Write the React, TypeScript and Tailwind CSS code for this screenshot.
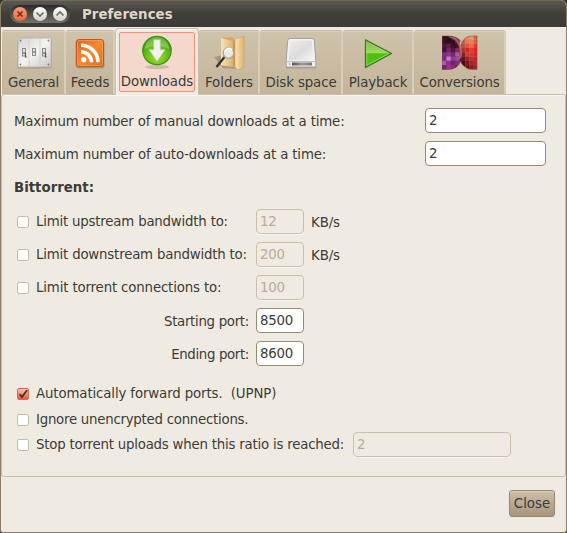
import React from "react";

function SwitchesIcon() {
  return (
    <svg width="36" height="36" viewBox="0 0 36 36">
      <defs>
        <linearGradient id="sw" x1="0" y1="0" x2="1" y2="1">
          <stop offset="0" stopColor="#d4d4d2" />
          <stop offset=".5" stopColor="#f3f3f1" />
          <stop offset="1" stopColor="#c9c9c6" />
        </linearGradient>
      </defs>
      <rect x="1.500" y="4" width="34" height="29.500" rx="2" fill="#887d69" opacity=".45" />
      <rect x="2" y="3" width="33" height="29" rx="1.500" fill="url(#sw)" stroke="#b0aea8" strokeWidth=".8" />
      <path d="M13 3.500v28M24 3.500v28" stroke="#cbcac6" strokeWidth=".8" />
      <g fill="#777"><circle cx="4.500" cy="5.500" r=".9" /><circle cx="32.500" cy="5.500" r=".9" /><circle cx="4.500" cy="29.500" r=".9" /><circle cx="32.500" cy="29.500" r=".9" /></g>
      <g fill="#e4e4e2" stroke="#85827d" strokeWidth=".9">
        <rect x="6.500" y="13.500" width="3" height="7.500" /><rect x="16.500" y="13.500" width="3" height="7" /><rect x="26.500" y="13.500" width="3" height="7.500" />
      </g>
      <path d="M7 18h2.500v3.800h1M17 17h2.500M27 18h2.500v3.800h1" stroke="#55534f" strokeWidth="1.200" fill="none" />
    </svg>
  );
}

function FeedIcon() {
  return (
    <svg width="36" height="36" viewBox="0 0 36 36">
      <defs>
        <linearGradient id="fd" x1="0" y1="0" x2="1" y2="1">
          <stop offset="0" stopColor="#df6122" /><stop offset=".5" stopColor="#f58a2d" /><stop offset="1" stopColor="#df691d" />
        </linearGradient>
      </defs>
      <rect x="3.500" y="5" width="29" height="28.500" rx="3" fill="#796546" opacity=".45" />
      <rect x="4.500" y="4.500" width="27" height="27" rx="2.500" fill="url(#fd)" stroke="#bd571c" />
      <rect x="5.500" y="5.500" width="25" height="25" rx="1.800" fill="none" stroke="#f6a55e" strokeWidth=".7" />
      <circle cx="11.700" cy="24.800" r="2.700" fill="#fff" />
      <path d="M9 16.800a10.500 10.500 0 0 1 10.500 10.500M9 10.200a17 17 0 0 1 17 17" fill="none" stroke="#fff" strokeWidth="3.600" />
    </svg>
  );
}

function DownloadIcon() {
  return (
    <svg width="36" height="36" viewBox="0 0 36 36">
      <defs>
        <radialGradient id="dl" cx=".5" cy=".75" r=".7">
          <stop offset="0" stopColor="#99de26" /><stop offset=".65" stopColor="#60b71a" /><stop offset="1" stopColor="#33940b" />
        </radialGradient>
      </defs>
      <ellipse cx="18" cy="33" rx="12" ry="2" fill="#8e776a" opacity=".35" />
      <circle cx="18" cy="16.500" r="14.200" fill="url(#dl)" stroke="#39990d" strokeWidth="1.300" />
      <path d="M6 15a12 12 0 0 1 24 0c-7-4-17-4-24 0Z" fill="#d5f3a4" opacity=".35" />
      <path d="M14.700 5.700h6.600v10h4.700L18 27.500 10 15.700h4.700Z" fill="#f3f3ee" stroke="#b6c99d" strokeWidth=".8" />
    </svg>
  );
}

function FolderIcon() {
  return (
    <svg width="36" height="36" viewBox="0 0 36 36">
      <defs>
        <linearGradient id="fo"><stop offset="0" stopColor="#f8e4b9" /><stop offset="1" stopColor="#ddb26d" /></linearGradient>
      </defs>
      <path d="m3 22 9-2 13 14-13-1Z" fill="#81735c" opacity=".5" />
      <path d="m10 3 11-1 4 4v26l-15-1Z" fill="#d5a965" />
      <path d="m10 3 12 3v26l-12-2Z" fill="url(#fo)" />
      <path d="m24 4 9-3v31l-6 3-3-3Z" fill="url(#fo)" stroke="#cda261" strokeWidth=".6" />
      <path d="M23 6v26" stroke="#bf8f47" strokeWidth="1.200" />
      <path d="m13.500 22-8 10" stroke="#33332f" strokeWidth="2.300" />
      <circle cx="17.500" cy="18" r="5.300" fill="#eee9df" stroke="#aaa59c" strokeWidth="1.300" />
      <path d="M14 17a4 4 0 0 1 7-2" fill="none" stroke="#fff" strokeWidth="2" />
    </svg>
  );
}

function DiskIcon() {
  return (
    <svg width="36" height="36" viewBox="0 0 36 36">
      <defs>
        <linearGradient id="dk" x1="0" y1="0" x2="1" y2="1"><stop offset="0" stopColor="#eee" /><stop offset=".55" stopColor="#dcdcde" /><stop offset="1" stopColor="#f6f6f6" /></linearGradient>
        <linearGradient id="sl"><stop offset="0" stopColor="#555" /><stop offset=".5" stopColor="#999" /><stop offset="1" stopColor="#777" /></linearGradient>
      </defs>
      <path d="M3 29.500h30v4H3Z" fill="#6e6250" opacity=".3" />
      <path d="M7 3.500h22q2 0 2.300 2l1.500 20v5q0 1.500-1.500 1.500H4.700q-1.500 0-1.500-1.500v-5l1.500-20q.3-2 2.300-2Z" fill="#f2f2f2" stroke="#a3a19d" />
      <path d="m7 5.500-1.300 18q0 1.500 1.500 1.500h21.600q1.500 0 1.500-1.500L29 5.500Z" fill="url(#dk)" />
      <path d="M4 26.500h28" stroke="#bbb" />
      <rect x="9" y="27.500" width="20" height="3" fill="url(#sl)" />
      <circle cx="6.500" cy="29" r=".8" fill="#64a747" />
    </svg>
  );
}

function PlayIcon() {
  return (
    <svg width="36" height="36" viewBox="0 0 36 36">
      <defs><linearGradient id="pl" x1="0" y1="0" x2="0" y2="1"><stop offset="0" stopColor="#75b946" /><stop offset=".48" stopColor="#a3db65" /><stop offset=".5" stopColor="#50bd0c" /><stop offset="1" stopColor="#5abe1f" /></linearGradient></defs>
      <path d="M5.500 4.800 31.500 18.500 5.500 32.500Z" fill="url(#pl)" stroke="#347c20" strokeWidth="1.300" strokeLinejoin="round" />
      <path d="m6.800 7 22 11.500-22 11.800Z" fill="none" stroke="#a6dd6b" strokeWidth=".7" />
    </svg>
  );
}

const leftMosaic = [
  "#2c171e #431421 #4a1a30 #7a3a48 #a05a52",
  "#3b1023 #26131d #401530 #5d2640 #9d3e50",
  "#4a1440 #61204c #381323 #45152a #a65068",
  "#3b1240 #6d2a62 #54173d #7b3058 #c27b94",
  "#753181 #8d3b89 #75277d #a3609a #893766",
  "#7d298e #c77bc8 #8e3b91 #9b548e #601b36",
  "#ad5aac #8c3292 #752070 #803078 #50183d",
  "#76256f #933a90 #8a2a80 #682050 #48142c",
].map((r) => r.split(" "));

const rightMosaic = [
  "#e09a70 #d38053 #e08a5c #ee9868 #c86d47",
  "#c66055 #d7634a #e87955 #ee7d54 #d5613f",
  "#db7b73 #d0584a #e1543c #ed6c4c #ef3029",
  "#a83a42 #c83732 #cb2a2d #e0412c #fc1720",
  "#6b1a22 #94212b #d13834 #d23637 #de1c25",
  "#39101b #66151b #96232a #c52d30 #c91f22",
  "#2c0a10 #4b0b11 #801518 #a82425 #b52829",
  "#2a0609 #49090e #6a0c11 #881d21 #9f2625",
].map((r) => r.split(" "));

function ConversionIcon() {
  return (
    <svg width="36" height="36" viewBox="0 0 36 36">
      <defs>
        <clipPath id="cl"><path d="M0 1h6q9 0 13 6 5 6 3 15l-3 2q-2 10-13 10.500H0Z" /></clipPath>
        <clipPath id="cr"><path d="M35 1h-5q-6 0-9 5-5 6-4 14 0 7 5 11 4 3.500 8 3.500h5Z" /></clipPath>
        <linearGradient id="sh"><stop offset="0" stopColor="#190612" stopOpacity=".35" /><stop offset=".4" stopColor="#150308" stopOpacity="0" /></linearGradient>
      </defs>
      <g clipPath="url(#cr)">
        {rightMosaic.map((row, y) => row.map((color, x) => <rect key={`${x}-${y}`} x={15 + x * 4.2} y={y * 4.3} width="4.300" height="4.400" fill={color} />))}
        <path d="M16 0h20v36H16Z" fill="url(#sh)" />
      </g>
      <g clipPath="url(#cl)">
        <path d="M0 0h19q-3 8-2 15 0 6 2 11v10H0Z" fill="#54173d" />
        <g>
          {leftMosaic.map((row, y) => row.slice(0, 4).map((color, x) => <rect key={`${x}-${y}`} x={x * 4.4} y={y * 4.3} width="4.500" height="4.400" fill={color} />))}
        </g>
        <path d="M7 1.500q9 2 11 10 2 6 0 12" fill="none" stroke="#c97d78" strokeWidth="2.200" opacity=".65" />
        <path d="M5 1q8 3 9 13-4-9-13-11Z" fill="#170b12" opacity=".55" />
      </g>
      <path d="M0 1h6q10 0 14 6.500Q23 1 30 1h5v33.500h-5q-8 0-11-8-4 8-13 8H0Z" fill="none" stroke="#884842" strokeWidth=".6" />
    </svg>
  );
}

const tabs = [
  { label: "General", width: "w-[64px]", icon: <SwitchesIcon />, text: "tracking-[-0.25px]" },
  { label: "Feeds", width: "w-[49px]", icon: <FeedIcon />, text: "" },
  { label: "Downloads", width: "w-[84px]", icon: <DownloadIcon />, text: "tracking-[-0.1px]", active: true },
  { label: "Folders", width: "w-[61px]", icon: <FolderIcon />, text: "" },
  { label: "Disk space", width: "w-[83px]", icon: <DiskIcon />, text: "tracking-[-0.1px]" },
  { label: "Playback", width: "w-[71px]", icon: <PlayIcon />, text: "tracking-[-0.1px]" },
  { label: "Conversions", width: "w-[92px]", icon: <ConversionIcon />, text: "tracking-[-0.15px]" },
];

function Field({ value, className = "w-[48px]", disabled = false }: { value: string; className?: string; disabled?: boolean }) {
  return (
    <input
      defaultValue={value}
      disabled={disabled}
      className={`h-[25px] shrink-0 rounded-[4px] border px-[3px] leading-[20px] tracking-[-0.2px] outline-none ${className} ${disabled ? "border-[#cbbfa8] bg-[#f0ebe2] text-[#b9ab96] shadow-[0_1px_0_#f8f5ef]" : "border-[#9c8a70] bg-white text-[#3c3b37]"}`}
    />
  );
}

function Check({ checked = false }: { checked?: boolean }) {
  return (
    <span className={`mr-[7px] h-3 w-3 shrink-0 rounded-[2px] border ${checked ? "border-[#d66952] bg-gradient-to-b from-[#f8c0b0] to-[#f15438]" : "border-[#c8bdac] bg-white"}`}>
      {checked && <svg width="10" height="10" viewBox="0 0 10 10"><path d="m1.500 5.200 2.500 2.900L9 1.200" fill="none" stroke="#39332e" strokeWidth="1.800" /></svg>}
    </span>
  );
}

function TitleButton({ kind }: { kind: "close" | "down" | "up" }) {
  const path = kind === "close" ? "m4.500 4.500 5 5m0-5-5 5" : kind === "down" ? "m3.500 5.500 3.500 3.500 3.500-3.500" : "M3.500 8.500 7 5l3.500 3.500";
  return (
    <span className={`h-[14px] w-[14px] rounded-full ${kind === "close" ? "bg-gradient-to-b from-[#f99a75] to-[#f0673a]" : "bg-gradient-to-b from-[#fffefa] to-[#d5d0c6]"}`}>
      <svg width="14" height="14" viewBox="0 0 14 14"><path d={path} fill="none" stroke={kind === "close" ? "#6b3324" : "#716c63"} strokeWidth="1.600" /></svg>
    </span>
  );
}

const limits = [
  { label: "Limit upstream bandwidth to:", value: "12", unit: "KB/s", text: "tracking-[-0.2px]" },
  { label: "Limit downstream bandwidth to:", value: "200", unit: "KB/s", text: "tracking-[-0.19px]" },
  { label: "Limit torrent connections to:", value: "100", unit: "", text: "tracking-[-0.15px]" },
];

const ports = [
  { label: "Starting port:", value: "8500", text: "tracking-[-0.3px]" },
  { label: "Ending port:", value: "8600", text: "tracking-[-0.35px]" },
];

export default function App() {
  return (
    <div className="h-[533px] w-[567px] overflow-hidden bg-[#3b352a] font-['DejaVu_Sans',sans-serif] text-[13.33px] leading-[16px] whitespace-nowrap text-[#3c3b37]">
      <div className="flex h-full flex-col overflow-hidden rounded-t-[6px] rounded-b-[3px] border-x border-b border-[#8b7c63] bg-[#f0ebe2]">
        <header className="flex h-[27px] shrink-0 items-center border-t border-[#75694f] bg-gradient-to-b from-[#5a5852] via-[#403e39] to-[#3c3b37] pl-[9px]">
          <div className="flex h-[18px] w-[60px] items-center gap-[6px] rounded-full bg-gradient-to-b from-[#2c2b29] to-[#74716b] pl-[3px]">
            <TitleButton kind="close" /><TitleButton kind="down" /><TitleButton kind="up" />
          </div>
          <h1 className="pt-px pl-[12px] text-[13.33px] leading-4 font-bold tracking-[0.04px] text-[#dfd8c8]">Preferences</h1>
        </header>

        <nav className="relative z-10 flex h-[68px] shrink-0 items-end pl-px">
          {tabs.map((tab) => tab.active ? (
            <div key={tab.label} className={`${tab.width} h-[67px] shrink-0 rounded-t-[4px] border-x border-t border-[#c8bda7] bg-[#f0ebe2] px-[3px] pt-[3px] shadow-[inset_1px_1px_0_#faf7f1]`}>
              <div className="flex h-[60px] flex-col items-center rounded-[2px] border border-[#f98f7b] bg-[#f4d8cc]">
                <span className="mt-px h-9 w-9">{tab.icon}</span>
                <span className={`mt-1 ${tab.text}`}>{tab.label}</span>
              </div>
            </div>
          ) : (
            <div key={tab.label} className={`${tab.width} mb-px flex h-16 shrink-0 flex-col items-center rounded-t-[3px] border-t border-r-2 border-t-[#c5b89f] border-r-[#d9ceba] bg-gradient-to-b from-[#cfc3ab] to-[#c4b59b] pl-px shadow-[inset_0_1px_0_#dbd1be]`}>
              <span className="mt-1 h-9 w-9">{tab.icon}</span>
              <span className={`mt-1 ${tab.text}`}>{tab.label}</span>
            </div>
          ))}
        </nav>

        <main className="-mt-px flex h-[383px] shrink-0 flex-col rounded-[3px] border border-[#cbbca7] pl-[12px] shadow-[inset_0_1px_0_#faf7f1]">
          <div className="mt-[13px] flex items-center">
            <span className="w-[411px] pt-[2px] tracking-[-0.16px]">Maximum number of manual downloads at a time:</span><Field value="2" className="w-[121px]" />
          </div>
          <div className="mt-2 flex items-center">
            <span className="w-[411px] pt-[2px] tracking-[-0.15px]">Maximum number of auto-downloads at a time:</span><Field value="2" className="w-[121px]" />
          </div>
          <h2 className="mt-[14px] h-4 text-[13.33px] leading-4 font-bold">Bittorrent:</h2>
          <section className="mt-[13px] flex flex-col gap-2">
            {limits.map((item) => (
              <div key={item.label} className="flex items-center pl-[3px]">
                <Check /><span className={`w-[220px] ${item.text}`}>{item.label}</span><Field value={item.value} disabled /><span className="pt-[2px] pl-[7px] tracking-[-0.1px]">{item.unit}</span>
              </div>
            ))}
            {ports.map((item) => (
              <div key={item.label} className="flex items-center"><span className={`w-[242px] pt-[2px] pr-[7px] text-right ${item.text}`}>{item.label}</span><Field value={item.value} /></div>
            ))}
          </section>
          <div className="mt-5 flex h-4 items-center pl-[3px]"><Check checked /><span className="tracking-[-0.12px] whitespace-pre">Automatically forward ports.  (UPNP)</span></div>
          <div className="mt-[10px] flex h-4 items-center pl-[3px]"><Check /><span className="tracking-[-0.25px]">Ignore unencrypted connections.</span></div>
          <div className="mt-1 flex h-[25px] items-center pl-[3px]"><Check /><span className="w-[317px] tracking-[-0.21px]">Stop torrent uploads when this ratio is reached:</span><Field value="2" className="w-[158px]" disabled /></div>
        </main>

        <footer className="flex justify-end pt-[13px] pr-[11px]">
          <button className="h-[27px] w-[46px] rounded-[3px] border border-[#98846b] bg-gradient-to-b from-[#cdbfaa] to-[#a8957e] shadow-[inset_0_1px_0_#ddd2c1]">Close</button>
        </footer>
      </div>
    </div>
  );
}
